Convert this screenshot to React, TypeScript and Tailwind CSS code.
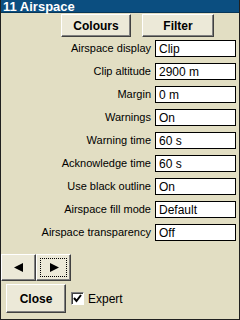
import React from "react";

const rows = [
  { label: "Airspace display", value: "Clip" },
  { label: "Clip altitude", value: "2900 m" },
  { label: "Margin", value: "0 m" },
  { label: "Warnings", value: "On" },
  { label: "Warning time", value: "60 s" },
  { label: "Acknowledge time", value: "60 s" },
  { label: "Use black outline", value: "On" },
  { label: "Airspace fill mode", value: "Default" },
  { label: "Airspace transparency", value: "Off" },
];

const btn =
  "flex items-center justify-center bg-[#ece9d8] border border-t-white border-l-white border-r-[#404040] border-b-[#404040] shadow-[inset_-1px_-1px_0_#808080]";

const App = () => {
  return (
    <div className="w-[240px] h-[320px] flex flex-col bg-[#e2dec3] border-x border-b border-[#202020] text-black text-[11px] font-['Liberation_Sans',Tahoma,sans-serif] overflow-hidden">
      {/* Title bar */}
      <div className="h-[13px] flex items-center pl-[3px] bg-[#0b4e80] border-b border-[#073658] text-white font-bold text-[13px] leading-none -mx-px">
        11 Airspace
      </div>

      {/* Top buttons */}
      <div className="flex gap-[11px] pl-[60px] mt-[1px]">
        <div className={`${btn} w-[70px] h-[23px] font-bold text-[12px]`}>Colours</div>
        <div className={`${btn} w-[72px] h-[23px] font-bold text-[12px]`}>Filter</div>
      </div>

      {/* Property rows */}
      <div className="flex flex-col gap-[6px] mt-[3px]">
        {rows.map(({ label, value }) => (
          <div key={label} className="flex items-center h-[17px]">
            <div className="w-[151px] text-right pr-[1px] whitespace-nowrap">{label}</div>
            <div className="ml-[3px] w-[81px] h-[17px] bg-white border border-black flex items-center pl-[3px] text-[12px]">
              {value}
            </div>
          </div>
        ))}
      </div>

      {/* Navigation arrows */}
      <div className="flex mt-[13px]">
        <div className={`${btn} w-[35px] h-[27px]`}>
          <svg width="10" height="9" viewBox="0 0 10 9">
            <polygon points="9,0 9,9 0,4.5" fill="black" />
          </svg>
        </div>
        <div className={`${btn} w-[35px] h-[27px] relative`}>
          <div className="absolute inset-[3px] border border-dotted border-black" />
          <svg width="10" height="9" viewBox="0 0 10 9">
            <polygon points="1,0 1,9 10,4.5" fill="black" />
          </svg>
        </div>
      </div>

      {/* Close + Expert */}
      <div className="flex items-center mt-[3px] pl-[5px]">
        <div className={`${btn} w-[60px] h-[29px] font-bold text-[12px]`}>Close</div>
        <div className="ml-[5px] w-[13px] h-[13px] bg-white border border-t-[#808080] border-l-[#808080] border-r-white border-b-white shadow-[inset_1px_1px_0_#404040] flex items-center justify-center">
          <svg width="9" height="9" viewBox="0 0 9 9">
            <polyline points="1,4 3.5,7 8,1" fill="none" stroke="black" strokeWidth="2" />
          </svg>
        </div>
        <span className="ml-[4px] text-[12px]">Expert</span>
      </div>
    </div>
  );
};

export default App;
